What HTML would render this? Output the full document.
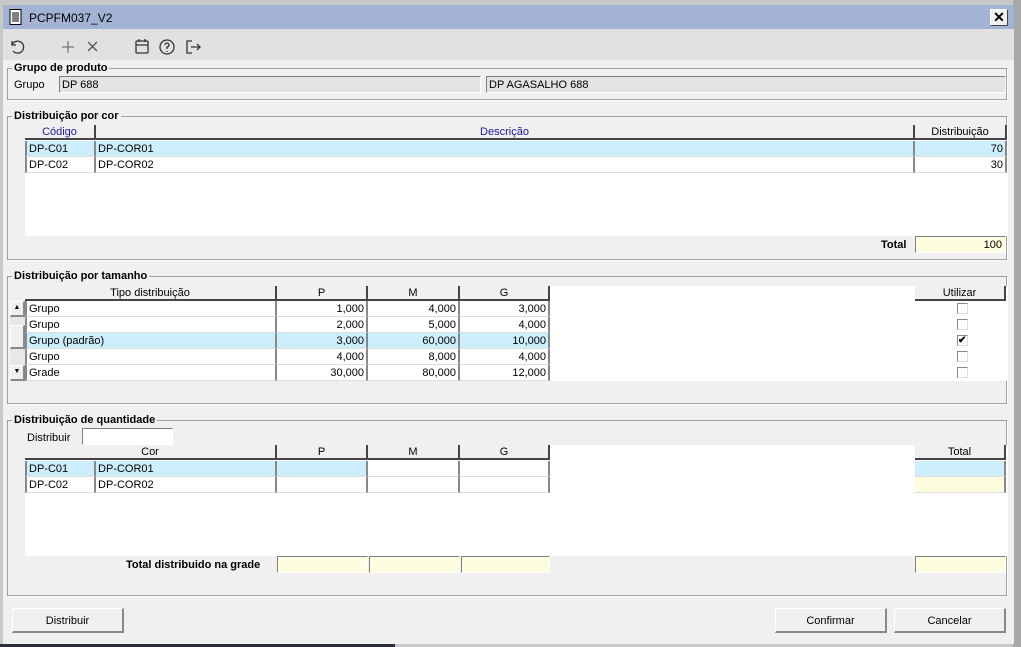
<!DOCTYPE html>
<html><head><meta charset="utf-8"><style>
*{box-sizing:border-box;margin:0;padding:0}
body{width:1021px;height:647px;overflow:hidden;background:#c8c8c8;font-family:"Liberation Sans",sans-serif;font-size:11px;color:#000;position:relative}
.a{position:absolute}
.win{left:3px;top:5px;width:1011px;height:639px;background:#f0f0f0}
.title{left:3px;top:5px;width:1011px;height:24px;background:#a3b3d3}
.tb{left:3px;top:29px;width:1011px;height:31px;background:#e1e1e1}
.fs{border:1px solid #a0a0a0;box-shadow:1px 1px 0 #fff}
.lg{font-weight:bold;background:#f0f0f0;padding:0 2px;font-size:11px;top:-7px;left:4px;line-height:13px}
.inp{background:#e3e3e3;border-top:1px solid #808080;border-left:1px solid #808080;border-bottom:1px solid #fff;border-right:1px solid #fff;padding-left:2px;line-height:17px}
.cell{border-right:2px solid #888;border-bottom:1px solid #ddd;height:16px;line-height:17px;padding:0 2px;white-space:nowrap;overflow:hidden}
.hd{background:#f0f0f0;border-right:2px solid #444;border-bottom:2px solid #444;text-align:center;height:15px;line-height:15px}
.r{text-align:right}
.btn{background:#f0f0f0;border:1px solid #fff;border-right:2px solid #888;border-bottom:2px solid #888;text-align:center;line-height:24px;height:25px}
.cb{width:11px;height:11px;border:1px solid #888;background:#fff;border-right-color:#ddd;border-bottom-color:#ddd}
.y{background:#fffde0}
.sel{background:#cdeefd}
.lbl{line-height:13px}
</style></head><body>
<div class="a" style="left:1013px;top:0;width:8px;height:647px;background:#a8a8a8"></div>
<div class="a win"></div>
<div class="a title"></div>
<svg class="a" style="left:9px;top:9px" width="14" height="16" viewBox="0 0 14 16"><rect x="1" y="0.5" width="11" height="15" fill="#fff" stroke="#000"/><path d="M3 4h7M3 6h7M3 8h7M3 10h7M3 12h7" stroke="#000"/></svg>
<div class="a" style="left:29px;top:11px;font-size:12px">PCPFM037_V2</div>
<div class="a" style="left:990px;top:9px;width:18px;height:17px;background:#f0f0f0;border:1px solid #fff;border-right-color:#444;border-bottom-color:#444;text-align:center;font-weight:bold;font-size:14px;line-height:15px">✕</div>
<div class="a tb"></div>
<svg class="a" style="left:8px;top:38px" width="120" height="18" viewBox="0 0 120 18" fill="none" stroke="#333" stroke-width="1.3">
<path d="M4 3v4h4M4 7a6 6 0 1 1 1 6"/>
<path d="M60 3v12M54 9h12" stroke="#777"/>
<path d="M80 4l9 9M89 4l-9 9" stroke="#555"/>
</svg>
<svg class="a" style="left:134px;top:37px" width="70" height="20" viewBox="0 0 70 20" fill="none" stroke="#333" stroke-width="1.3">
<rect x="2" y="4" width="12" height="12" rx="1"/><path d="M2 8h12M5 2v3M11 2v3"/>
<circle cx="33" cy="10" r="7"/><path d="M31 8a2 2 0 1 1 2 2v2M33 14v1"/>
<path d="M58 4h-5v12h5M57 10h9M63 7l3 3-3 3"/>
</svg>

<div class="a fs" style="left:7px;top:68px;width:1000px;height:32px"><div class="a lg">Grupo de produto</div></div>
<div class="a lbl" style="left:14px;top:79px">Grupo</div>
<div class="a inp" style="left:59px;top:76px;width:422px;height:17px">DP 688</div>
<div class="a inp" style="left:486px;top:76px;width:520px;height:17px">DP AGASALHO 688</div>

<div class="a fs" style="left:7px;top:116px;width:1000px;height:144px"><div class="a lg">Distribuição por cor</div></div>
<div class="a" style="left:25px;top:125px;width:982px;height:111px;background:#fff"></div>
<div class="a hd" style="left:25px;top:125px;width:71px;color:#1a1aa0">Código</div>
<div class="a hd" style="left:96px;top:125px;width:819px;color:#1a1aa0">Descrição</div>
<div class="a hd" style="left:915px;top:125px;width:92px">Distribuição</div>
<div class="a sel" style="left:25px;top:141px;width:982px;height:16px"></div>
<div class="a cell" style="left:25px;top:141px;width:71px;border-left:2px solid #888">DP-C01</div>
<div class="a cell" style="left:96px;top:141px;width:819px">DP-COR01</div>
<div class="a cell r" style="left:915px;top:141px;width:92px">70</div>
<div class="a cell" style="left:25px;top:157px;width:71px;border-left:2px solid #888">DP-C02</div>
<div class="a cell" style="left:96px;top:157px;width:819px">DP-COR02</div>
<div class="a cell r" style="left:915px;top:157px;width:92px">30</div>
<div class="a lbl" style="left:881px;top:239px;font-weight:bold">Total</div>
<div class="a inp y r" style="left:915px;top:236px;width:91px;height:17px;padding-right:3px">100</div>

<div class="a fs" style="left:7px;top:276px;width:1000px;height:128px"><div class="a lg">Distribuição por tamanho</div></div>
<div class="a" style="left:25px;top:286px;width:982px;height:95px;background:#fff"></div>
<div class="a hd" style="left:25px;top:286px;width:252px">Tipo distribuição</div>
<div class="a hd" style="left:277px;top:286px;width:91px">P</div>
<div class="a hd" style="left:368px;top:286px;width:92px">M</div>
<div class="a hd" style="left:460px;top:286px;width:90px">G</div>
<div class="a hd" style="left:915px;top:286px;width:91px">Utilizar</div>
<div class="a" style="left:10px;top:301px;width:15px;height:80px;background:#e8e8e8"></div>
<div class="a btn" style="left:10px;top:301px;width:15px;height:16px;font-size:7px;line-height:12px">▲</div>
<div class="a btn" style="left:10px;top:325px;width:15px;height:24px"></div>
<div class="a btn" style="left:10px;top:365px;width:15px;height:16px;font-size:7px;line-height:12px">▼</div>
<div class="a sel" style="left:25px;top:333px;width:525px;height:16px"></div>
<div class="a" style="left:25px;top:301px">
<div class="a cell" style="left:0;top:0;width:252px;border-left:2px solid #888">Grupo</div><div class="a cell r" style="left:252px;top:0;width:91px">1,000</div><div class="a cell r" style="left:343px;top:0;width:92px">4,000</div><div class="a cell r" style="left:435px;top:0;width:90px">3,000</div>
<div class="a cell" style="left:0;top:16px;width:252px;border-left:2px solid #888">Grupo</div><div class="a cell r" style="left:252px;top:16px;width:91px">2,000</div><div class="a cell r" style="left:343px;top:16px;width:92px">5,000</div><div class="a cell r" style="left:435px;top:16px;width:90px">4,000</div>
<div class="a cell" style="left:0;top:32px;width:252px;border-left:2px solid #888">Grupo (padrão)</div><div class="a cell r" style="left:252px;top:32px;width:91px">3,000</div><div class="a cell r" style="left:343px;top:32px;width:92px">60,000</div><div class="a cell r" style="left:435px;top:32px;width:90px">10,000</div>
<div class="a cell" style="left:0;top:48px;width:252px;border-left:2px solid #888">Grupo</div><div class="a cell r" style="left:252px;top:48px;width:91px">4,000</div><div class="a cell r" style="left:343px;top:48px;width:92px">8,000</div><div class="a cell r" style="left:435px;top:48px;width:90px">4,000</div>
<div class="a cell" style="left:0;top:64px;width:252px;border-left:2px solid #888">Grade</div><div class="a cell r" style="left:252px;top:64px;width:91px">30,000</div><div class="a cell r" style="left:343px;top:64px;width:92px">80,000</div><div class="a cell r" style="left:435px;top:64px;width:90px">12,000</div>
</div>
<div class="a cb" style="left:957px;top:303px"></div>
<div class="a cb" style="left:957px;top:319px"></div>
<div class="a cb" style="left:957px;top:335px;font-size:10px;line-height:9px;font-weight:bold">✔</div>
<div class="a cb" style="left:957px;top:351px"></div>
<div class="a cb" style="left:957px;top:367px"></div>

<div class="a fs" style="left:7px;top:420px;width:1000px;height:176px"><div class="a lg">Distribuição de quantidade</div></div>
<div class="a lbl" style="left:27px;top:432px">Distribuir</div>
<div class="a inp" style="left:82px;top:428px;width:91px;height:17px;background:#fff"></div>
<div class="a" style="left:25px;top:445px;width:982px;height:111px;background:#fff"></div>
<div class="a hd" style="left:25px;top:445px;width:252px">Cor</div>
<div class="a hd" style="left:277px;top:445px;width:91px">P</div>
<div class="a hd" style="left:368px;top:445px;width:92px">M</div>
<div class="a hd" style="left:460px;top:445px;width:90px">G</div>
<div class="a hd" style="left:915px;top:445px;width:91px">Total</div>
<div class="a sel" style="left:25px;top:461px;width:343px;height:16px"></div>
<div class="a cell" style="left:25px;top:461px;width:71px;border-left:2px solid #888">DP-C01</div>
<div class="a cell" style="left:96px;top:461px;width:181px">DP-COR01</div>
<div class="a cell" style="left:277px;top:461px;width:91px"></div>
<div class="a cell" style="left:368px;top:461px;width:92px"></div>
<div class="a cell" style="left:460px;top:461px;width:90px"></div>
<div class="a cell sel" style="left:915px;top:461px;width:91px"></div>
<div class="a cell" style="left:25px;top:477px;width:71px;border-left:2px solid #888">DP-C02</div>
<div class="a cell" style="left:96px;top:477px;width:181px">DP-COR02</div>
<div class="a cell" style="left:277px;top:477px;width:91px"></div>
<div class="a cell" style="left:368px;top:477px;width:92px"></div>
<div class="a cell" style="left:460px;top:477px;width:90px"></div>
<div class="a cell y" style="left:915px;top:477px;width:91px"></div>
<div class="a lbl" style="left:126px;top:559px;font-weight:bold">Total distribuido na grade</div>
<div class="a inp y" style="left:277px;top:556px;width:91px;height:17px"></div>
<div class="a inp y" style="left:369px;top:556px;width:91px;height:17px"></div>
<div class="a inp y" style="left:461px;top:556px;width:89px;height:17px"></div>
<div class="a inp y" style="left:915px;top:556px;width:91px;height:17px"></div>

<div class="a btn" style="left:12px;top:608px;width:112px">Distribuir</div>
<div class="a btn" style="left:775px;top:608px;width:112px">Confirmar</div>
<div class="a btn" style="left:894px;top:608px;width:112px">Cancelar</div>
<div class="a" style="left:0;top:644px;width:395px;height:3px;background:#2a2e3a"></div>
</body></html>
